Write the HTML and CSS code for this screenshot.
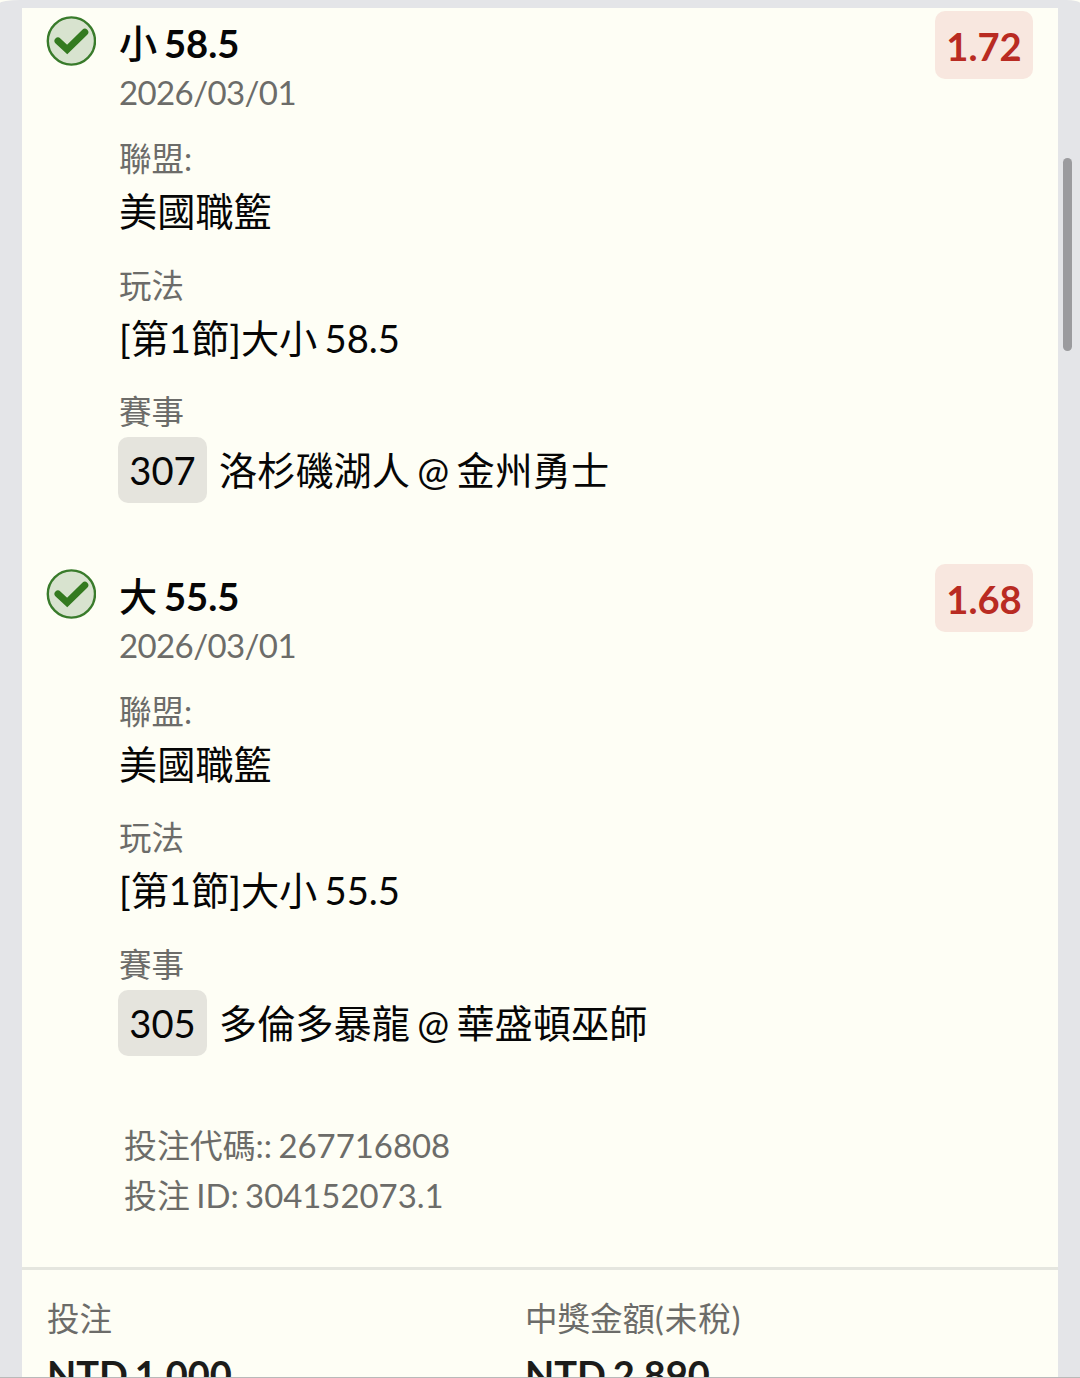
FILE: index.html
```html
<!DOCTYPE html>
<html lang="zh-Hant">
	<head>
		<meta charset="utf-8" />
		<meta name="viewport" content="width=device-width, initial-scale=1.0" />
		<title>投注</title>

		<link rel="stylesheet" href="styles.css">
	</head>

	<body>
		<main class="panel">
			<div class="ticket">
				<section class="leg">
					<svg class="leg-status" viewBox="0 0 50 50">
						<circle cx="25.4" cy="25" r="23.6" />
						<path d="M12 25 L21.2 33.5 L38.8 16.3" />
					</svg>

					<div class="leg-body">
						<h2 class="leg-title"><span class="pick">小</span> 58.5</h2>
						<div class="leg-date">2026/03/01</div>

						<dl class="leg-details">
							<dt>聯盟:</dt>
							<dd>美國職籃</dd>
							<dt>玩法</dt>
							<dd>[第1節]大小 58.5</dd>
							<dt>賽事</dt>
							<dd class="match"><span class="match-code">307</span> <span>洛杉磯湖人 @ 金州勇士</span></dd>
						</dl>
					</div>

					<div class="odds">1.72</div>
				</section>

				<section class="leg">
					<svg class="leg-status" viewBox="0 0 50 50">
						<circle cx="25.4" cy="25" r="23.6" />
						<path d="M12 25 L21.2 33.5 L38.8 16.3" />
					</svg>

					<div class="leg-body">
						<h2 class="leg-title"><span class="pick">大</span> 55.5</h2>
						<div class="leg-date">2026/03/01</div>

						<dl class="leg-details">
							<dt>聯盟:</dt>
							<dd>美國職籃</dd>
							<dt>玩法</dt>
							<dd>[第1節]大小 55.5</dd>
							<dt>賽事</dt>
							<dd class="match"><span class="match-code">305</span> <span>多倫多暴龍 @ 華盛頓巫師</span></dd>
						</dl>
					</div>

					<div class="odds">1.68</div>
				</section>

				<div class="ticket-ids">
					<div>投注代碼:: 267716808</div>
					<div>投注 ID: 304152073.1</div>
				</div>

				<footer class="totals">
					<div>
						<div class="totals-label">投注</div>
						<div class="totals-value">NTD 1,000</div>
					</div>
					<div>
						<div class="totals-label">中獎金額<span class="note">(未稅)</span></div>
						<div class="totals-value">NTD 2,890</div>
					</div>
				</footer>
			</div>

			<div class="scroll-thumb"></div>
		</main>
	</body>
</html>
```

FILE: styles.css
```css
* {
	box-sizing: border-box;
}

body {
	margin: 0;
	background: #fefef5;
	color: #060606;
	font-family: Lato, "Noto Sans CJK TC", sans-serif;
	font-size: 38.2px;
	word-spacing: -2.5px;
}

.panel {
	position: relative;
	height: 1378px;
	padding: 8px 22px 0;
	overflow: hidden;
	border-bottom: 1px solid #b9b9b9;
	border-radius: 20px 14px 0 0 / 3px 3px 0 0;
	background: #e4e5e8;
}

.ticket {
	background: #fefef5;
}



/**
 * One selection of the bet
 */
.leg {
	display: flex;
	align-items: flex-start;
	height: 552.5px;
	padding: 3px 25px 0 24px;
}

.leg-status {
	flex: none;
	width: 50px;
	height: 50px;
	margin: 5px 23px 0 0;
}

.leg-status circle {
	fill: #d8e3cf;
	stroke: #397b2b;
	stroke-width: 2.4;
}

.leg-status path {
	fill: none;
	stroke: #347a20;
	stroke-width: 7;
	stroke-linecap: round;
}

.leg-body {
	flex: 1;
	padding-top: 7px;
}

.leg-title {
	margin: 0;
	font-size: 38.2px;
	font-weight: 700;
	line-height: 50px;
}

.leg-title .pick {
	font-weight: 500;
}

.leg-date {
	color: #6c6c69;
	font-size: 33px;
	letter-spacing: -0.6px;
	line-height: 48px;
}

.leg-details {
	margin: 20px 0 0;
}

.leg-details dt {
	color: #6c6c69;
	font-size: 32.5px;
	line-height: 46px;
}

.leg-details dd {
	margin: 0 0 21.5px;
	line-height: 59px;
}

.leg-details dd:nth-of-type(2) {
	margin-bottom: 22px;
	line-height: 58.5px;
}

.leg-details .match {
	display: flex;
	gap: 12px;
	margin-left: -1px;
	padding-top: 2px;
	line-height: 66px;
}

.match-code {
	width: 89px;
	padding-top: 1px;
	border-radius: 10px;
	background: #e5e4dd;
	line-height: 65px;
	text-align: center;
}

.odds {
	width: 98px;
	padding-top: 2px;
	border-radius: 10px;
	background: #f8e7df;
	color: #b92b22;
	font-size: 38.2px;
	font-weight: 700;
	line-height: 66px;
	text-align: center;
}



.ticket-ids {
	height: 154px;
	padding: 7.5px 0 0 102px;
	color: #6c6c69;
	font-size: 32.9px;
	line-height: 50px;
	word-spacing: -2px;
}

.totals {
	display: grid;
	grid-template-columns: 478px 1fr;
	padding: 26px 25px;
	border-top: 3px solid #e5e6df;
}

.totals-label {
	color: #6c6c69;
	font-size: 32.5px;
	line-height: 46px;
}

.totals-label .note {
	letter-spacing: 1px;
}

.totals-value {
	color: #1c1c1a;
	font-size: 38px;
	font-weight: 700;
	line-height: 65px;
}



.scroll-thumb {
	position: absolute;
	top: 158px;
	right: 8px;
	width: 9px;
	height: 193px;
	border-radius: 5px;
	background: #9b9b9e;
}
```
